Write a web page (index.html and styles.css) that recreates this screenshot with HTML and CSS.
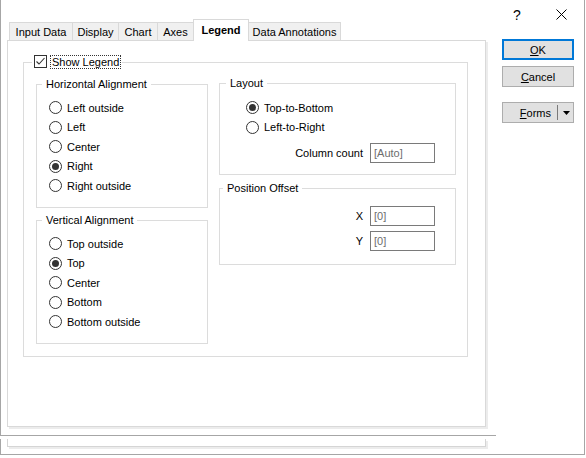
FILE: index.html
```html
<!DOCTYPE html>
<html>
<head>
<meta charset="utf-8">
<link rel="stylesheet" href="styles.css">
</head>
<body>
<div class="window">
  <div class="top">
    <div class="left">
      <div class="tabs">
        <div class="tab w-input">Input Data</div>
        <div class="tab w-display">Display</div>
        <div class="tab w-chart">Chart</div>
        <div class="tab w-axes">Axes</div>
        <div class="tab tab-active w-legend">Legend</div>
        <div class="tab w-annot">Data Annotations</div>
      </div>
      <div class="panel">
        <div class="og">
          <div class="og-head">
            <span class="check"><svg width="11" height="11" viewBox="0 0 11 11"><path d="M1.5 5.5 L4 8 L9.5 2" fill="none" stroke="#333" stroke-width="1.1"/></svg></span>
            <span class="focus">Show Legend</span>
          </div>
          <div class="cols">
            <div class="col col1">
              <div class="group group-h">
                <div class="gtitle">Horizontal Alignment</div>
                <div class="rows">
                  <div class="radio"><span class="circle"></span>Left outside</div>
                  <div class="radio"><span class="circle"></span>Left</div>
                  <div class="radio"><span class="circle"></span>Center</div>
                  <div class="radio"><span class="circle on"></span>Right</div>
                  <div class="radio"><span class="circle"></span>Right outside</div>
                </div>
              </div>
              <div class="group group-v">
                <div class="gtitle">Vertical Alignment</div>
                <div class="rows">
                  <div class="radio"><span class="circle"></span>Top outside</div>
                  <div class="radio"><span class="circle on"></span>Top</div>
                  <div class="radio"><span class="circle"></span>Center</div>
                  <div class="radio"><span class="circle"></span>Bottom</div>
                  <div class="radio"><span class="circle"></span>Bottom outside</div>
                </div>
              </div>
            </div>
            <div class="col col2">
              <div class="group group-layout">
                <div class="gtitle">Layout</div>
                <div class="rows rows-layout">
                  <div class="radio"><span class="circle on"></span>Top-to-Bottom</div>
                  <div class="radio"><span class="circle"></span>Left-to-Right</div>
                </div>
                <div class="field field-cc"><span>Column count</span><span class="input">[Auto]</span></div>
              </div>
              <div class="group group-pos">
                <div class="gtitle gtitle-pos">Position Offset</div>
                <div class="field field-x"><span>X</span><span class="input">[0]</span></div>
                <div class="field field-y"><span>Y</span><span class="input">[0]</span></div>
              </div>
            </div>
          </div>
        </div>
      </div>
    </div>
    <div class="right">
      <div class="caption">
        <span class="help">?</span>
        <svg class="close" width="11" height="11" viewBox="0 0 11 11"><path d="M0.5 0.5 L10.5 10.5 M10.5 0.5 L0.5 10.5" stroke="#000" stroke-width="1" fill="none"/></svg>
      </div>
      <div class="buttons">
        <div class="btn btn-default"><span><u>O</u>K</span></div>
        <div class="btn btn-cancel"><span><u>C</u>ancel</span></div>
        <div class="btn btn-forms">
          <span class="forms-text"><u>F</u>orms</span>
          <span class="sep"></span>
          <svg class="arrow" width="7" height="4" viewBox="0 0 7 4"><path d="M0 0 H7 L3.5 4 Z" fill="#000"/></svg>
        </div>
      </div>
    </div>
  </div>
  <div class="lower"><div class="lower-panel"></div></div>
</div>
</body>
</html>
```

FILE: styles.css
```css
html, body {
  margin: 0;
  padding: 0;
  background: #fff;
}
body {
  font-family: "Liberation Sans", Arial, sans-serif;
  font-size: 11px;
  color: #000;
}
.window {
  width: 585px;
  height: 455px;
  display: flex;
  flex-direction: column;
}
.top {
  display: flex;
  height: 439px;
}
.left {
  width: 496px;
  height: 436px;
  box-sizing: border-box;
  border-left: 1px solid #a6a6a6;
  border-bottom: 1px solid #a6a6a6;
}
.right {
  width: 89px;
  height: 439px;
  box-sizing: border-box;
  border-right: 1px solid #a6a6a6;
}
.lower {
  width: 585px;
  height: 16px;
  box-sizing: border-box;
  border: 1px solid #a6a6a6;
  border-top: none;
}
.lower-panel {
  margin-left: 6px;
  width: 479px;
  height: 8px;
  box-sizing: border-box;
  border: 1px solid #d5d5d5;
  border-top: none;
  box-shadow: 2px 2px 0 #ececec;
}

/* tabs */
.tabs {
  display: flex;
  align-items: flex-end;
  height: 21px;
  margin: 19px 0 0 8px;
}
.tab {
  height: 18px;
  box-sizing: border-box;
  border: 1px solid #d9d9d9;
  border-bottom: none;
  background: #f0f0f0;
  display: flex;
  align-items: center;
  justify-content: center;
  margin-left: -1px;
  white-space: nowrap;
}
.tab:first-child { margin-left: 0; }
.tab-active {
  height: 22px;
  margin-bottom: -1px;
  background: #fff;
  font-weight: bold;
  position: relative;
  z-index: 1;
  padding-bottom: 1px;
}
.w-input { width: 64px; }
.w-display { width: 47px; }
.w-chart { width: 40px; }
.w-axes { width: 37px; }
.w-legend { width: 56px; }
.w-annot { width: 93px; }

.panel {
  margin-left: 6px;
  width: 479px;
  height: 387px;
  box-sizing: border-box;
  border: 1px solid #d9d9d9;
  box-shadow: 2px 2px 0 #ececec;
  background: #fff;
  padding: 21px 0 0 15px;
}

/* outer group */
.og {
  width: 445px;
  height: 295px;
  box-sizing: border-box;
  border: 1px solid #dcdcdc;
  padding: 0 10px 0 12px;
  display: flex;
  flex-direction: column;
  align-items: flex-start;
}
.og-head {
  display: flex;
  align-items: center;
  height: 13px;
  margin: -8px 0 0 -4px;
  padding: 0 1px 0 2px;
  background: #fff;
}
.check {
  width: 13px;
  height: 13px;
  box-sizing: border-box;
  border: 1px solid #333;
  display: flex;
  align-items: center;
  justify-content: center;
  background: #fff;
}
.check svg { display: block; }
.focus {
  margin-left: 3px;
  height: 14px;
  box-sizing: border-box;
  border: 1px dotted #333;
  padding: 0 1px;
  line-height: 12px;
}
.cols {
  display: flex;
  gap: 11px;
  margin-top: 16px;
}
.col {
  display: flex;
  flex-direction: column;
}
.col1 { width: 172px; }
.col2 { width: 237px; margin-top: -1px; }

/* group boxes */
.group {
  box-sizing: border-box;
  border: 1px solid #dcdcdc;
  display: flex;
  flex-direction: column;
  align-items: flex-start;
}
.gtitle {
  height: 14px;
  line-height: 14px;
  margin: -8px 0 0 5px;
  padding: 0 4px;
  background: #fff;
  white-space: nowrap;
}
.group-h { height: 124px; padding-left: 12px; }
.group-h .gtitle, .group-v .gtitle { margin-left: -7px; }
.group-v { height: 124px; padding-left: 12px; margin-top: 12px; }
.group-layout { height: 92px; }
.group-layout .gtitle { margin-left: 6px; }
.group-pos { height: 77px; margin-top: 13px; }
.gtitle-pos { margin-left: 3px; }

.rows {
  margin-top: 7px;
  display: flex;
  flex-direction: column;
}
.rows-layout { margin-top: 8px; padding-left: 26px; }
.radio {
  height: 19.5px;
  display: flex;
  align-items: center;
  gap: 5px;
  white-space: nowrap;
}
.circle {
  width: 13px;
  height: 13px;
  box-sizing: border-box;
  border: 1px solid #333;
  border-radius: 50%;
  background: #fff;
  display: flex;
  align-items: center;
  justify-content: center;
  flex: none;
}
.circle.on::after {
  content: "";
  width: 7px;
  height: 7px;
  border-radius: 50%;
  background: #333;
}

.field {
  align-self: stretch;
  display: flex;
  justify-content: flex-end;
  align-items: center;
  gap: 7px;
  padding-right: 20px;
}
.field-cc { margin-top: 6px; }
.field-x { margin-top: 11px; }
.field-y { margin-top: 5px; }
.input {
  width: 65px;
  height: 20px;
  box-sizing: border-box;
  border: 1px solid #7a7a7a;
  color: #6d6d6d;
  line-height: 18px;
  padding-left: 3px;
}

/* right column */
.caption {
  height: 29px;
  display: flex;
  align-items: center;
  padding-left: 17px;
}
.help {
  font-size: 14px;
  line-height: 14px;
  width: 8px;
}
.close {
  display: block;
  margin-left: 35px;
}
.buttons {
  margin-top: 10px;
  padding-left: 6px;
  display: flex;
  flex-direction: column;
}
.btn {
  width: 72px;
  height: 21px;
  box-sizing: border-box;
  border: 1px solid #adadad;
  background: #e1e1e1;
  display: flex;
  align-items: center;
  justify-content: center;
}
.btn-default { border: 2px solid #0078d7; }
.btn-cancel { margin-top: 6px; }
.btn-forms {
  margin-top: 15px;
  justify-content: flex-end;
  padding-right: 3px;
}
.sep {
  width: 1px;
  height: 15px;
  background: #7a7a7a;
  margin: 0 5px 0 6px;
}
.arrow { display: block; }
```
